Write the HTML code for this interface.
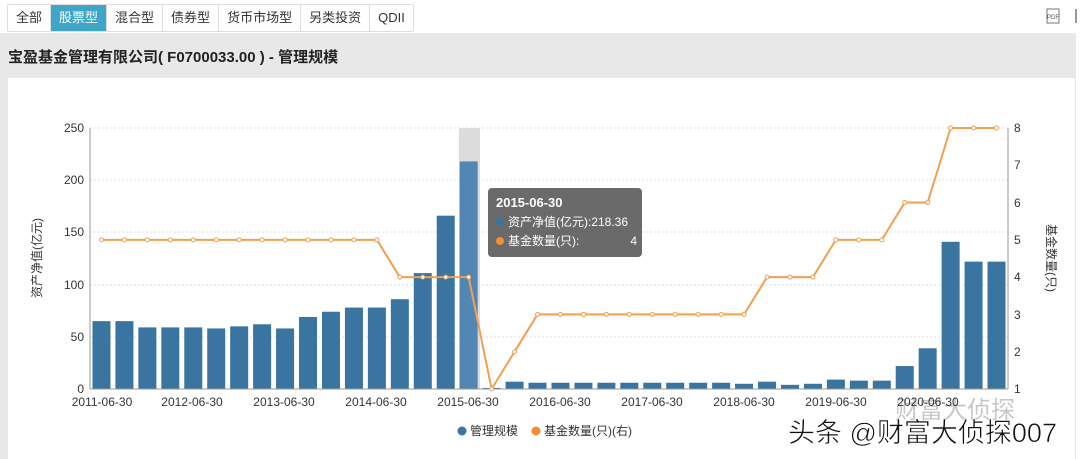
<!DOCTYPE html>
<html><head><meta charset="utf-8"><style>
body{margin:0;width:1080px;height:459px;overflow:hidden;background:#fff;font-family:"Liberation Sans","Noto Sans CJK SC",sans-serif;position:relative}
.tabs{position:absolute;left:7px;top:4px;display:flex;border:1px solid #ddd;border-radius:2px;height:26px}
.tabs div{padding:0 8px;line-height:26px;font-size:13px;color:#333;border-right:1px solid #ddd}
.tabs div:last-child{border-right:none}
.tabs .on{background:#3fa6c9;color:#fff}
.band{position:absolute;left:0;top:33px;width:1076px;height:426px;background:#e8e8e8}
.title{position:absolute;left:8px;top:46px;font-size:15px;color:#222;font-weight:bold}
.panel{position:absolute;left:8px;top:78px;width:1067px;height:381px;background:#fff}
svg{position:absolute;left:0;top:0}
</style></head><body>
<div class="tabs"><div>全部</div><div class="on">股票型</div><div>混合型</div><div>债券型</div><div>货币市场型</div><div>另类投资</div><div>QDII</div></div>
<svg width="1080" height="35" style="z-index:2"><rect x="1047" y="9" width="12" height="14" fill="#fff" stroke="#777" stroke-width="1"/><text x="1053" y="19" font-size="6" text-anchor="middle" fill="#555" font-family="Liberation Sans">PDF</text><rect x="1075" y="9" width="2" height="14" fill="#999"/></svg>
<div class="band"></div>
<div class="title">宝盈基金管理有限公司( F0700033.00 ) - 管理规模</div>
<div class="panel"></div>
<svg id="c" width="1080" height="459" font-family="Liberation Sans,Noto Sans CJK SC,sans-serif">
<g stroke="#ddd" stroke-dasharray="2,2"><line x1="90" x2="1008" y1="128" y2="128"/><line x1="90" x2="1008" y1="180" y2="180"/><line x1="90" x2="1008" y1="232" y2="232"/><line x1="90" x2="1008" y1="285" y2="285"/><line x1="90" x2="1008" y1="337" y2="337"/></g>
<rect x="459" y="128" width="21" height="261" fill="#dcdcdc"/>
<g id="bars"></g>
<line x1="90" y1="128" x2="90" y2="389" stroke="#999"/>
<line x1="1008" y1="128" x2="1008" y2="389" stroke="#999"/>
<line x1="90" y1="389" x2="1008" y2="389" stroke="#999"/>
<polyline id="ln" fill="none" stroke="#f0a050" stroke-width="2"/>
<g id="pts"></g>
<g font-size="12" fill="#333" text-anchor="end"><text x="84" y="132">250</text><text x="84" y="184">200</text><text x="84" y="236">150</text><text x="84" y="289">100</text><text x="84" y="341">50</text><text x="84" y="393">0</text></g>
<g font-size="12" fill="#333"><text x="1014" y="132">8</text><text x="1014" y="169">7</text><text x="1014" y="207">6</text><text x="1014" y="244">5</text><text x="1014" y="281">4</text><text x="1014" y="319">3</text><text x="1014" y="356">2</text><text x="1014" y="393">1</text></g>
<g font-size="12" fill="#333" text-anchor="middle"><text x="102" y="406">2011-06-30</text><text x="192" y="406">2012-06-30</text><text x="284" y="406">2013-06-30</text><text x="376" y="406">2014-06-30</text><text x="468" y="406">2015-06-30</text><text x="560" y="406">2016-06-30</text><text x="652" y="406">2017-06-30</text><text x="744" y="406">2018-06-30</text><text x="836" y="406">2019-06-30</text><text x="928" y="406">2020-06-30</text></g>
<text transform="translate(41,258) rotate(-90)" font-size="12" fill="#333" text-anchor="middle">资产净值(亿元)</text>
<text transform="translate(1047,258) rotate(90)" font-size="12" fill="#333" text-anchor="middle">基金数量(只)</text>
<rect x="488" y="188" width="154" height="69" rx="4" fill="#555" fill-opacity="0.88"/>
<text x="496" y="207" font-size="13" fill="#fff" font-weight="bold">2015-06-30</text>
<circle cx="500" cy="222" r="4" fill="#3a74a0"/><text x="508" y="226" font-size="12" fill="#fff">资产净值(亿元):218.36</text>
<circle cx="500" cy="241" r="4" fill="#f0902f"/><text x="508" y="245" font-size="12" fill="#fff">基金数量(只):</text><text x="637" y="245" font-size="12" fill="#fff" text-anchor="end">4</text>
<circle cx="462" cy="431" r="4.5" fill="#3a74a0"/><text x="470" y="435" font-size="12" fill="#333">管理规模</text>
<circle cx="536" cy="431" r="4.5" fill="#f0902f"/><text x="544" y="435" font-size="12" fill="#333">基金数量(只)(右)</text>
<text x="895" y="418" font-size="24" fill="#000" fill-opacity="0.22">财富大侦探</text>
<text x="788" y="442" font-size="27" fill="#111" stroke="#fff" stroke-width="0.6">头条 @财富大侦探007</text>
</svg>
<script>
var v=[65,65,59,59,59,58,60,62,58,69,74,78,78,86,111,166,218,1,7,7,6,6,6,6,6,6,6,6,6,5,7,4,5,9,8,8,22,39,141,122,122];
v=v.slice(0,17).concat(v.slice(18));v[17]=1;
var n=[5,5,5,5,5,5,5,5,5,5,5,5,5,4,4,4,4,1,2,3,3,3,3,3,3,3,3,3,3,4,4,4,5,5,5,6,6,8,8,8];
var w=22.95,b='',p='',pts='';
for(var i=0;i<40;i++){var cx=90+w*(i+.5),h=v[i]*1.044;
b+='<rect x="'+(cx-9)+'" y="'+(389-h)+'" width="18" height="'+h+'" fill="'+(i==16?'#5287b3':'#3a74a0')+'"/>';
var y=389-(n[i]-1)*37.29;p+=cx+','+y+' ';pts+='<circle cx="'+cx+'" cy="'+y+'" r="2" fill="#fff" stroke="#f0a050"/>';}
document.getElementById('bars').innerHTML=b;document.getElementById('ln').setAttribute('points',p);document.getElementById('pts').innerHTML=pts;
</script>
</body></html>
